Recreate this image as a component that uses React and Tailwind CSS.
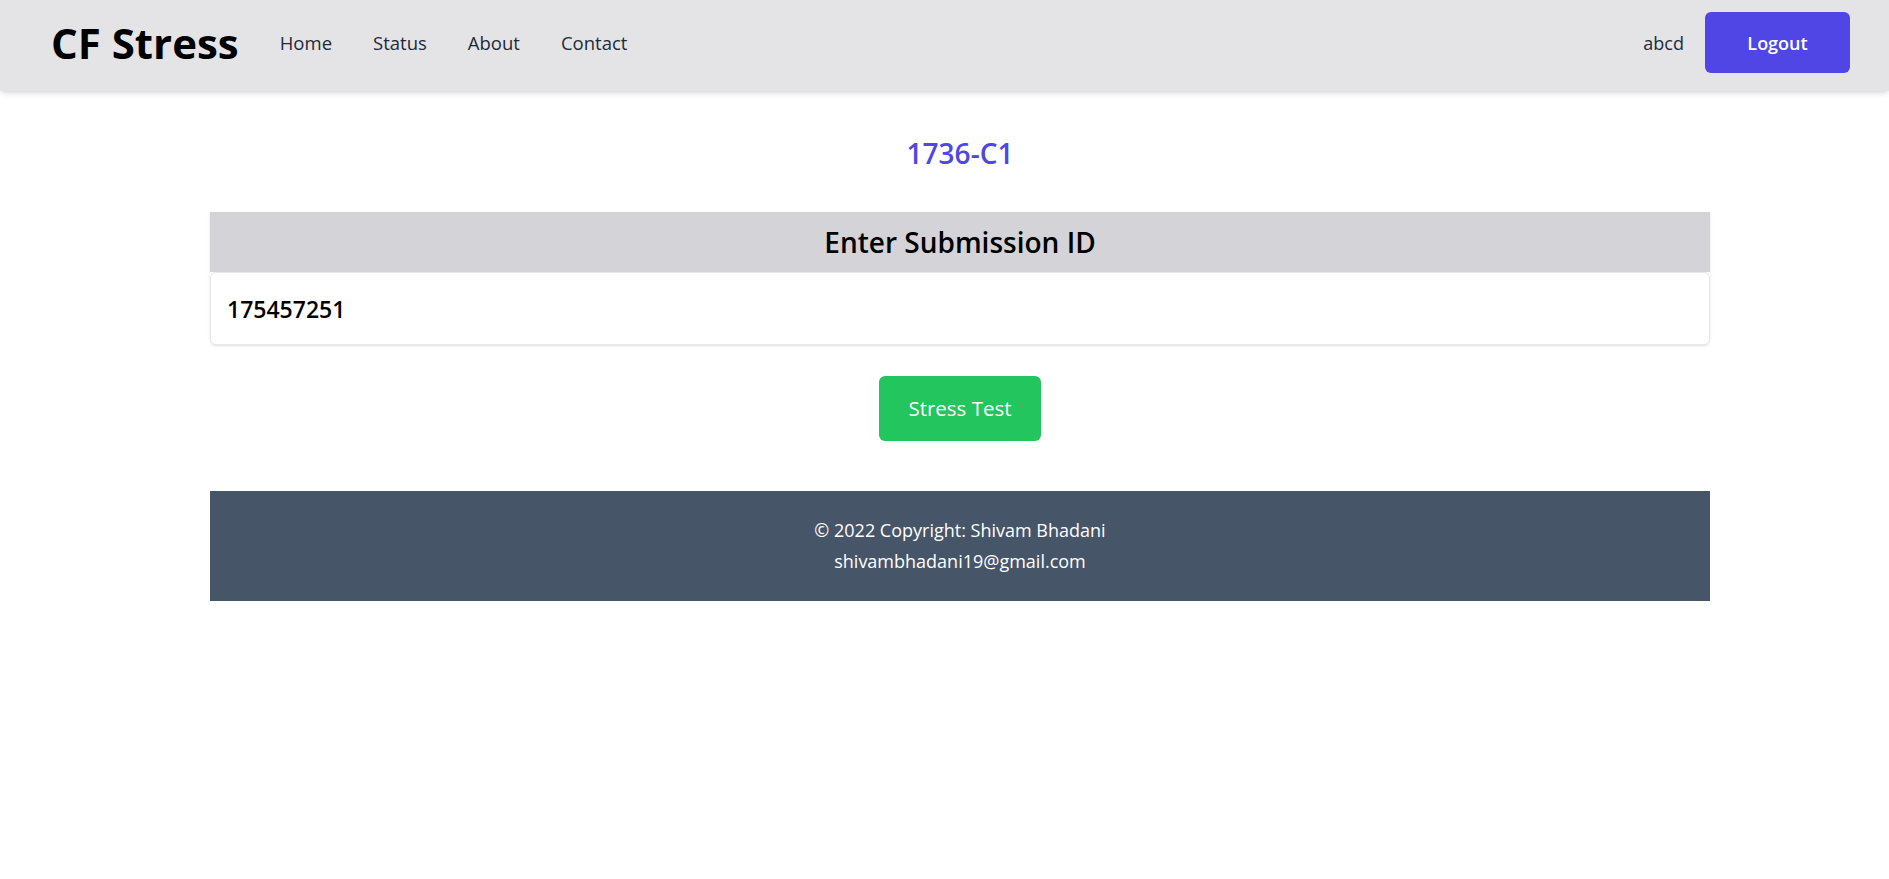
import React from "react";

const links = ["Home", "Status", "About", "Contact"];

const Navbar = () => {
  return (
    <nav className="flex items-center justify-between bg-[#e4e4e7] shadow-md h-[91px] pl-[51px] pr-[39px] pb-[6px]">
      <div className="flex items-center">
        <span className="text-[42px] font-bold text-black leading-none">
          CF Stress
        </span>
        <ul className="flex items-center ml-[41px] gap-[41px] text-[18.5px] text-gray-800">
          {links.map((link) => (
            <li key={link}>
              <a href="#">{link}</a>
            </li>
          ))}
        </ul>
      </div>
      <div className="flex items-center gap-[21px]">
        <span className="text-lg text-gray-800">abcd</span>
        <button className="bg-[#4f46e5] text-white text-lg font-semibold rounded-md w-[145px] h-[61px]">
          Logout
        </button>
      </div>
    </nav>
  );
};

const App = () => {
  return (
    <div
      className="min-h-[879px] bg-white"
      style={{ fontFamily: '"Open Sans", "Noto Sans", sans-serif' }}
    >
      <Navbar />
      <main className="ml-[210px] w-[1500px]">
        <h2 className="text-center text-[#4f46e5] text-[28px] font-semibold leading-[36px] mt-[44px] mb-[41px]">
          1736-C1
        </h2>

        <div className="shadow-sm rounded-b-md">
          <div className="bg-[#d4d4d8] h-[60px] flex items-center justify-center">
            <h3 className="text-[28px] font-semibold text-black">
              Enter Submission ID
            </h3>
          </div>
          <input
            type="text"
            defaultValue="175457251"
            className="block w-full h-[73px] px-4 border border-gray-200 rounded-md bg-white text-[23px] font-semibold text-black outline-none"
          />
        </div>

        <div className="flex justify-center mt-[31px]">
          <button className="bg-[#22c55e] text-white text-[20.5px] rounded-md w-[162px] h-[65px]">
            Stress Test
          </button>
        </div>

        <footer className="mt-[50px] bg-[#475569] text-white text-center text-[18px] leading-[31px] py-[24px]">
          <p>© 2022 Copyright: Shivam Bhadani</p>
          <p>shivambhadani19@gmail.com</p>
        </footer>
      </main>
    </div>
  );
};

export default App;
